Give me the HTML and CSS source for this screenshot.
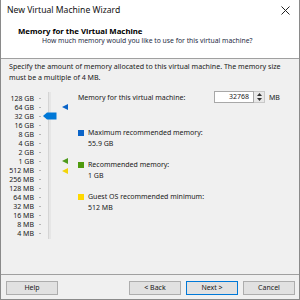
FILE: index.html
```html
<!DOCTYPE html>
<html>
<head>
<meta charset="utf-8">
<link rel="stylesheet" href="styles.css">
</head>
<body>
<div class="window">
  <div class="titlebar">
    <span class="title">New Virtual Machine Wizard</span>
    <svg class="close" width="9" height="9" viewBox="0 0 9 9"><path d="M0.5 0.5 L8.5 8.5 M8.5 0.5 L0.5 8.5" stroke="#222" stroke-width="1" fill="none"/></svg>
  </div>
  <div class="header">
    <div class="h-title">Memory for the Virtual Machine</div>
    <div class="h-sub">How much memory would you like to use for this virtual machine?</div>
  </div>
  <div class="content">
    <p class="intro">Specify the amount of memory allocated to this virtual machine. The memory size<br>must be a multiple of 4 MB.</p>
    <div class="main">
      <div class="slider">
        <ul class="scale">
          <li>128 GB</li><li>64 GB</li><li>32 GB</li><li>16 GB</li><li>8 GB</li><li>4 GB</li><li>2 GB</li><li>1 GB</li>
          <li>512 MB</li><li>256 MB</li><li>128 MB</li><li>64 MB</li><li>32 MB</li><li>16 MB</li><li>8 MB</li><li>4 MB</li>
        </ul>
        <div class="ticks"></div>
        <div class="track"></div>
        <svg class="thumb" width="14" height="8" viewBox="0 0 14 8"><path d="M0 4 L4 0.5 L13.5 0.5 L13.5 7.5 L4 7.5 Z" fill="#0078d7"/></svg>
        <svg class="marker m-max" width="6" height="6" viewBox="0 0 6 6"><path d="M0 3 L6 0 L6 6 Z" fill="#0a64c8"/></svg>
        <svg class="marker m-rec" width="6" height="6" viewBox="0 0 6 6"><path d="M0 3 L6 0 L6 6 Z" fill="#4e9a1c"/></svg>
        <svg class="marker m-min" width="6" height="6" viewBox="0 0 6 6"><path d="M0 3 L6 0 L6 6 Z" fill="#f2d40a"/></svg>
      </div>
      <div class="panel">
        <div class="mem-row">
          <span class="mem-label">Memory for this virtual machine:</span>
          <div class="spin">
            <div class="spin-input">32768</div>
            <div class="spin-btns">
              <div class="spin-btn"><svg width="5" height="3" viewBox="0 0 5 3"><path d="M0 3 L2.5 0 L5 3 Z" fill="#333"/></svg></div>
              <div class="spin-btn"><svg width="5" height="3" viewBox="0 0 5 3"><path d="M0 0 L2.5 3 L5 0 Z" fill="#333"/></svg></div>
            </div>
          </div>
          <span class="unit">MB</span>
        </div>
        <div class="legend">
          <div class="item"><span class="sq sq-blue"></span><div class="item-text">Maximum recommended memory:<br>55.9 GB</div></div>
          <div class="item"><span class="sq sq-green"></span><div class="item-text">Recommended memory:<br>1 GB</div></div>
          <div class="item"><span class="sq sq-yellow"></span><div class="item-text">Guest OS recommended minimum:<br>512 MB</div></div>
        </div>
      </div>
    </div>
  </div>
  <div class="footer">
    <button class="btn">Help</button>
    <div class="spacer"></div>
    <button class="btn">&lt; Back</button>
    <button class="btn btn-default">Next &gt;</button>
    <button class="btn">Cancel</button>
  </div>
</div>
</body>
</html>
```
FILE: styles.css
```css
* { box-sizing: border-box; }
html, body { margin: 0; padding: 0; }
body {
  width: 300px;
  height: 300px;
  font-family: "Noto Sans", sans-serif;
  font-size: 7px;
  color: #1a1a1a;
  background: #fff;
}
.window {
  width: 300px;
  height: 300px;
  display: flex;
  flex-direction: column;
  border-left: 1px solid #8a8a8a;
  border-right: 1px solid #8a8a8a;
  border-bottom: 1px solid #8a8a8a;
  background: #f0f0f0;
}
.titlebar {
  height: 20px;
  background: #fff;
  display: flex;
  align-items: center;
  justify-content: space-between;
  padding: 0 6px 0 6px;
}
.title { font-size: 8.6px; color: #111; }
.close { margin-right: 3px; }
.header {
  height: 39px;
  background: #fff;
  border-bottom: 1px solid #a0a0a0;
  padding-top: 6px;
}
.h-title {
  font-weight: bold;
  font-size: 7.8px;
  line-height: 10px;
  padding-left: 17px;
  color: #000;
}
.h-sub {
  line-height: 10px;
  padding-left: 41px;
  font-size: 6.8px;
  color: #1e2a44;
}
.content {
  flex: 1;
  padding: 2px 8px 0 8px;
}
.intro {
  margin: 0;
  line-height: 11px;
  font-size: 7.1px;
}
.main {
  margin-top: 8px;
  display: flex;
}
.slider {
  position: relative;
  width: 69px;
  height: 150px;
  display: flex;
  align-items: flex-start;
  padding-top: 3px;
}
.scale {
  list-style: none;
  margin: 0;
  padding: 0;
  width: 25px;
  text-align: right;
}
.scale li { height: 9px; line-height: 9px; white-space: nowrap; }
.ticks {
  margin-left: 5px;
  width: 2px;
  height: 144px;
  background: repeating-linear-gradient(to bottom, transparent 0, transparent 4px, #b4b4b4 4px, #b4b4b4 5px, transparent 5px, transparent 9px);
}
.track {
  margin-left: 7px;
  width: 3px;
  height: 147px;
  margin-top: -2px;
  background: #e6e6e6;
  border-left: 1px solid #d4d4d4;
}
.thumb { position: absolute; left: 34px; top: 21px; }
.marker { position: absolute; left: 53px; }
.m-max { top: 13px; }
.m-rec { top: 67px; }
.m-min { top: 77px; }
.panel { flex: 1; }
.mem-row {
  display: flex;
  align-items: center;
  height: 12px;
}
.mem-label { width: 136px; }
.spin { display: flex; height: 12px; }
.spin-input {
  width: 40px;
  height: 12px;
  background: #fff;
  border: 1px solid #a8a8a8;
  text-align: right;
  padding-right: 4px;
  line-height: 10px;
}
.spin-btns {
  width: 11px;
  display: flex;
  flex-direction: column;
  border: 1px solid #c8c8c8;
  border-left: none;
  background: #e8e8e8;
}
.spin-btn {
  flex: 1;
  display: flex;
  align-items: center;
  justify-content: center;
}
.unit { margin-left: 4px; }
.legend {
  margin-top: 24px;
  display: flex;
  flex-direction: column;
  gap: 10px;
}
.item { display: flex; align-items: flex-start; }
.sq { width: 6px; height: 6px; margin-top: 3px; margin-right: 4px; flex: none; }
.sq-blue { background: #0a64c8; }
.sq-green { background: #4e9a0e; }
.sq-yellow { background: #ffd800; }
.item-text { line-height: 11px; }
.footer {
  height: 25px;
  border-top: 1px solid #a0a0a0;
  display: flex;
  padding: 6px 4px 0 5px;
  gap: 5px;
}
.spacer { flex: 1; }
.btn {
  width: 52px;
  height: 14px;
  padding: 0;
  font-family: "Noto Sans", sans-serif;
  font-size: 7px;
  color: #1a1a1a;
  background: #e1e1e1;
  border: 1px solid #adadad;
  line-height: 12px;
}
.btn-default { border-color: #0078d7; }
```
